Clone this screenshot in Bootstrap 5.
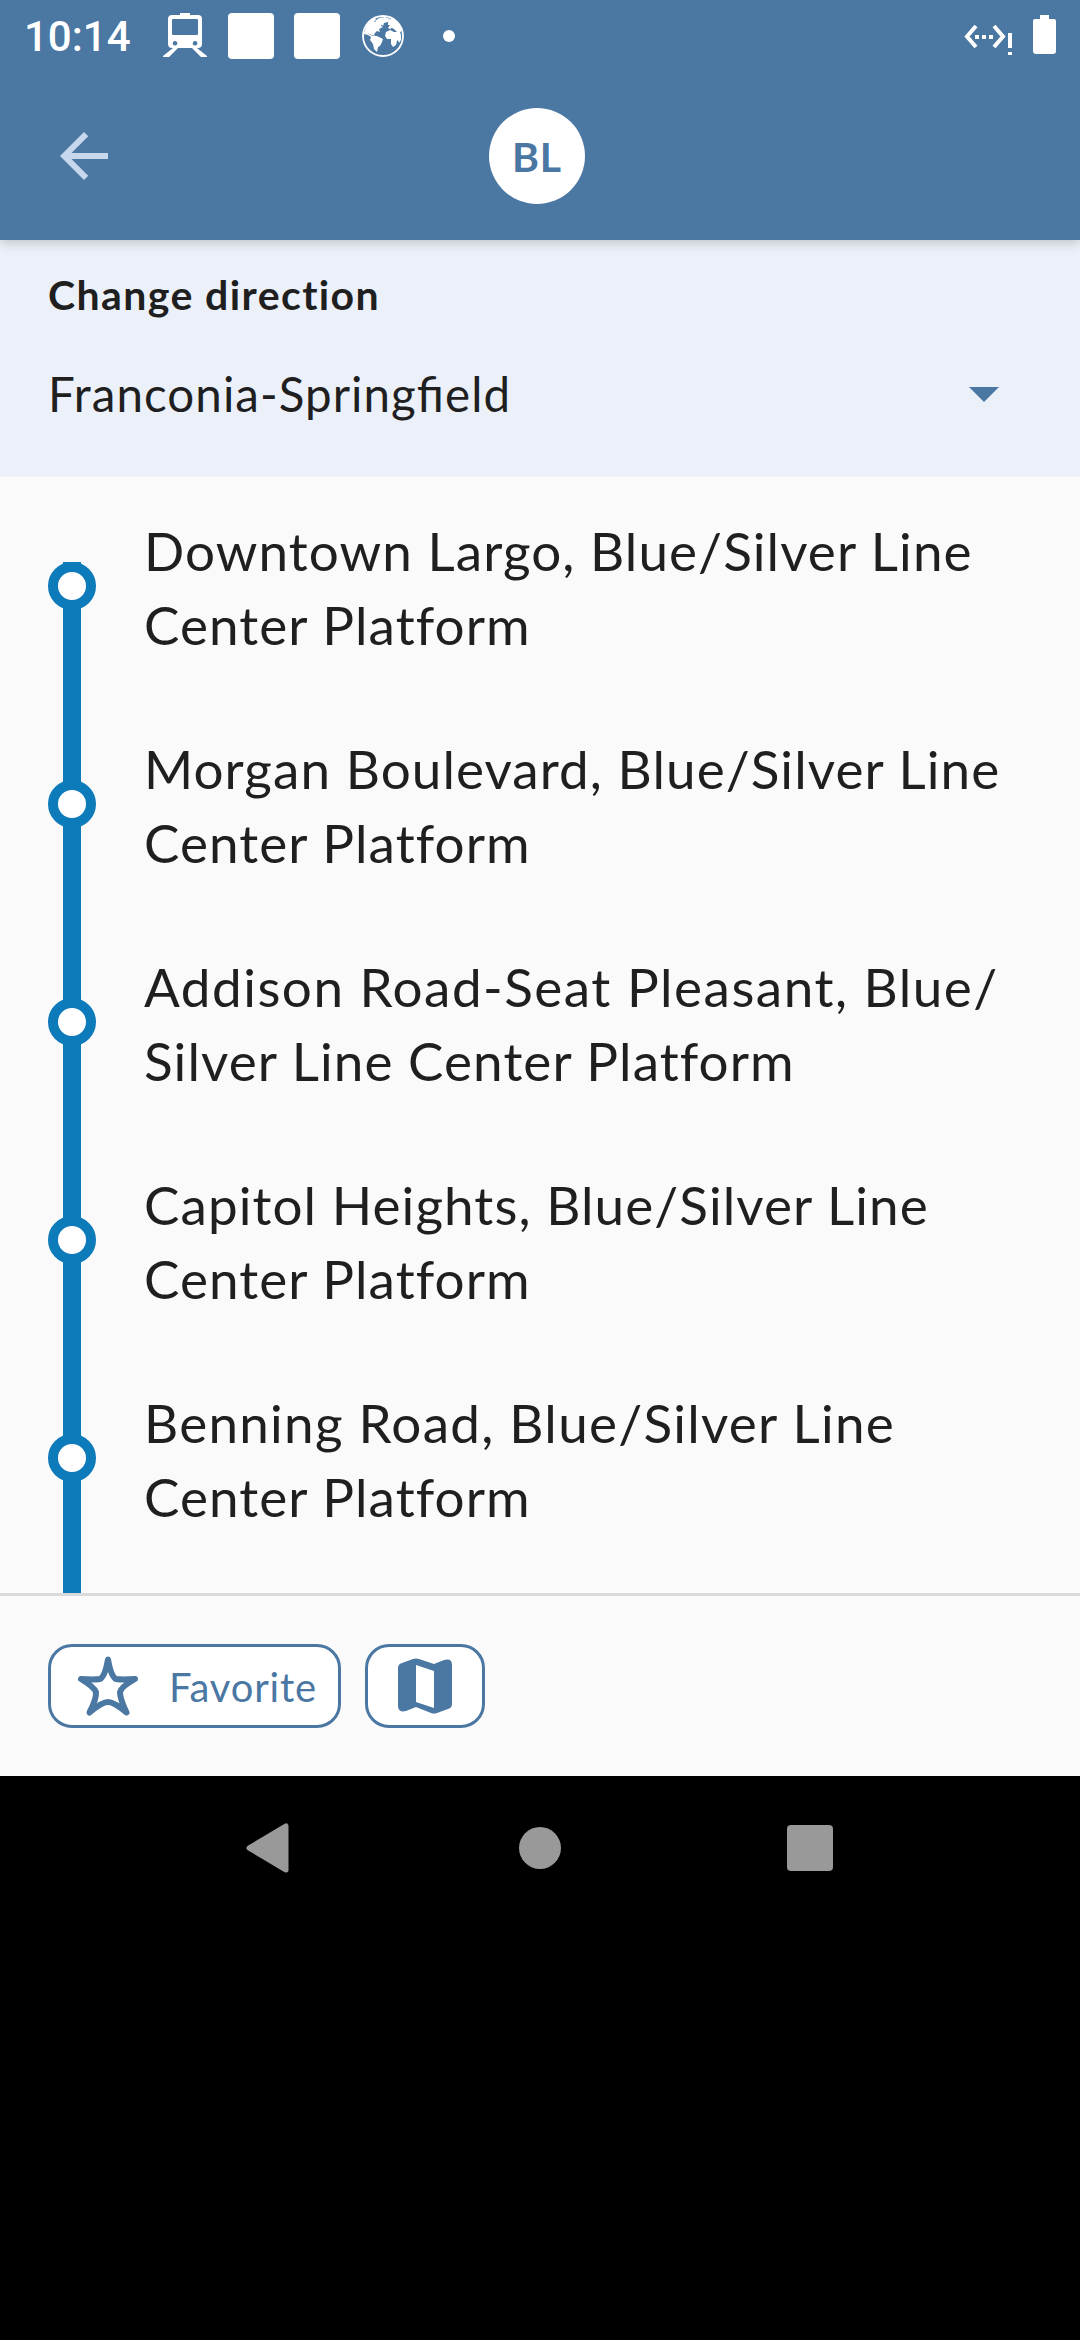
<!DOCTYPE html>
<html lang="en">
<head>
<meta charset="utf-8">
<meta name="viewport" content="width=device-width, initial-scale=1">
<title>Blue Line stops</title>
<link href="https://cdn.jsdelivr.net/npm/bootstrap@5.3.0/dist/css/bootstrap.min.css" rel="stylesheet">
<style>
  body { background: #000; font-family: Lato, "Noto Sans", sans-serif; color: #1f1f1f; }
  svg { display: block; flex: none; }
  .screen { width: 1080px; height: 2340px; background: #000; }
  .brand-bg { background: #4b77a3; }
  .status-bar { height: 72px; padding: 0 24px; z-index: 2; }
  .clock { font: 500 42px/72px Roboto, sans-serif; width: 139px; letter-spacing: 0; padding-top: 2px; }
  .tile { width: 46px; height: 46px; border-radius: 4px; margin-left: 20px; }
  .tile-first { margin-left: 21px; }
  .globe { margin-left: 22px; }
  .more-dot { margin-left: 39px; }
  .battery { margin-left: 20px; }
  .app-bar { height: 168px; padding: 0 48px; box-shadow: 0 2px 12px rgba(0,0,0,.22); z-index: 1; }
  .route-badge { width: 96px; height: 96px; color: #4b77a3; font-size: 41px; font-weight: 700; margin-left: 369px; letter-spacing: .8px; padding-top: 2px; }
  .direction { height: 237px; background: #ecf1f9; padding: 30px 81px 0 48px; }
  .direction h1 { font-size: 41px; font-weight: 700; line-height: 50px; margin: 0 0 44px; letter-spacing: 1.4px; }
  .picked { font-size: 47.5px; line-height: 60px; letter-spacing: 1.05px; font-feature-settings: "liga" 1; }
  .panel { background: #fafafa; }
  .stops { height: 1116px; padding: 37px 48px 0; }
  .stop { height: 218px; gap: 48px; }
  .rail { width: 48px; height: 218px; background: linear-gradient(#0d7aba,#0d7aba) 15px 0/18px 100% no-repeat; flex: none; margin-top: 48px; }
  .ring { width: 48px; height: 48px; border: 10px solid #0d7aba; background: #fff; }
  .stop-name { font-size: 53px; line-height: 74px; white-space: nowrap; letter-spacing: 1.08px; }
  .ls-wide { letter-spacing: 1.5px; }
  .ls-mid { letter-spacing: 1.27px; }
  .actions { height: 183px; border-top: 3px solid #dadada; padding: 48px 48px 0; gap: 24px; }
  .act { height: 84px; border: 3px solid #4b77a3; border-radius: 24px; background: #fff; color: #4b77a3; font-size: 40px; padding: 0; }
  .act-fav { width: 293px; gap: 28px; padding-left: 24px; letter-spacing: .8px; }
  .act-fav span { padding-top: 2px; }
  .act-map { width: 120px; }
  .sys-nav { height: 144px; padding: 0 135px; }
  .sys-nav > div { width: 270px; }
</style>
</head>
<body>
<main class="screen overflow-hidden">
  <div class="status-bar brand-bg text-white d-flex align-items-center position-relative">
    <div class="clock">10:14</div>
    <svg width="44" height="46" viewBox="0 0 44 46" fill="#fff"><path fill-rule="evenodd" d="M17 0h10v2h8q4 0 4 4v25q0 4-4 4h-1l10 8v1h-6L29 35H15L6 44H0v-1l10-8H9q-4 0-4-4V6q0-4 4-4h8zM10 6q-1 0-1 1v14q0 1 1 1h24q1 0 1-1V7q0-1-1-1zM12 28a2.300 2.300 0 1 0 .1 0zM32 28a2.300 2.300 0 1 0 .1 0z"/></svg>
    <div class="tile tile-first bg-white"></div>
    <div class="tile bg-white"></div>
    <svg class="globe" width="42" height="42" viewBox="0 0 42 42"><circle cx="21" cy="21" r="20" fill="none" stroke="#fff" stroke-width="1.800"/><path fill="#fff" d="M2 18 5 9l7-6 2 1-2 3 4-1 4 2-1 3 2 1-4 2 1 3-3-1-3 3 1 2-3-1-2-1zM2 18l5 1 4 2 4 0 6 3-1 3-2 4-2 1-1 5-3-3-1-5-3-4 1-3-3-2-4-1zM17 3l6-1 5 2-2 3-4 1-1 3-3-3-5-2zM26 8l1-3 4-2 6 6 3 7-2 1 1 3 0 5-2 3-1-3-1 1-1 4-3 2-2-3 0-5-4 0-2-3 1-4 4-2 4 2 3 0-3-3-2-1-2 1-2-1 2-3-2 0z"/></svg>
    <svg class="more-dot" width="12" height="12"><circle cx="6" cy="6" r="6" fill="#fff"/></svg>
    <div class="d-flex ms-auto">
      <svg width="50" height="42" viewBox="0 0 50 42"><path d="M13 11 4 21.500 13 32M31 11l9 10.500L31 32" fill="none" stroke="#fff" stroke-width="4"/><path fill="#fff" d="M12 20h4v4h-4zM19 20h4v4h-4zM26 20h4v4h-4zM45 18h4v15h-4zM45 37h4v3h-4z"/></svg>
      <svg class="battery" width="23" height="40" viewBox="0 0 23 40"><path fill="#fff" d="M7 0h9v4h5q2 0 2 2v30q0 3-3 3H3q-3 0-3-3V6q0-2 2-2h5z"/></svg>
    </div>
  </div>
  <header class="app-bar brand-bg d-flex align-items-center position-relative">
    <svg width="72" height="72" viewBox="0 0 24 24" fill="#c8d8ec"><path d="M20 11H7.830l5.590-5.590L12 4l-8 8 8 8 1.410-1.410L7.830 13H20z"/></svg>
    <div class="route-badge rounded-circle bg-white d-flex align-items-center justify-content-center">BL</div>
  </header>
  <section class="direction">
    <h1>Change direction</h1>
    <div class="d-flex align-items-center justify-content-between">
      <span class="picked">Franconia-Springfield</span>
      <svg width="30" height="15"><path d="M0 0h30L15 15z" fill="#4b77a3"/></svg>
    </div>
  </section>
  <section class="panel stops overflow-hidden">
    <div class="stop d-flex"><div class="rail"><div class="ring rounded-circle"></div></div><div class="stop-name">Downtown Largo, Blue/Silver Line<br>Center Platform</div></div>
    <div class="stop d-flex"><div class="rail"><div class="ring rounded-circle"></div></div><div class="stop-name">Morgan Boulevard, Blue/Silver Line<br>Center Platform</div></div>
    <div class="stop d-flex"><div class="rail"><div class="ring rounded-circle"></div></div><div class="stop-name"><span class="ls-wide">Addison Road-Seat Pleasant, Blue/</span><br>Silver Line Center Platform</div></div>
    <div class="stop d-flex"><div class="rail"><div class="ring rounded-circle"></div></div><div class="stop-name">Capitol Heights, Blue/Silver Line<br>Center Platform</div></div>
    <div class="stop d-flex"><div class="rail"><div class="ring rounded-circle"></div></div><div class="stop-name"><span class="ls-mid">Benning Road, Blue/Silver Line</span><br>Center Platform</div></div>
  </section>
  <footer class="panel actions d-flex">
    <button class="btn act act-fav d-flex align-items-center"><svg width="66" height="66" viewBox="0 0 66 66"><path d="M33 6.500q3 17 8 19.500 7 1 19 0-14 8-15 13 0 7 6.500 20.500-12.500-10.500-18.500-10.500T14.500 59.500q7-13.500 6.500-20.500-2-5-15-13 12 1 19 0 5-2.500 8-19.500z" fill="none" stroke="#4b77a3" stroke-width="6" stroke-linejoin="round"/></svg><span>Favorite</span></button>
    <button class="btn act act-map d-flex align-items-center justify-content-center"><svg width="54" height="56" viewBox="0 0 54 56"><path fill="#4b77a3" fill-rule="evenodd" d="M0 10q0-4 4-5L15 1q3-1 6 0l15 5 10-4q8-2 8 5v39q0 4-4 5l-11 4q-3 1-6 0l-15-6-10 4q-8 2-8-5zM18 7v37l18 6V13z"/></svg></button>
  </footer>
  <nav class="sys-nav d-flex align-items-center">
    <div class="d-flex justify-content-center"><svg width="48" height="50" viewBox="0 0 48 50"><path d="M3 25 40 3v44z" fill="#999" stroke="#999" stroke-width="5" stroke-linejoin="round"/></svg></div>
    <div class="d-flex justify-content-center"><svg width="42" height="42"><circle cx="21" cy="21" r="21" fill="#999"/></svg></div>
    <div class="d-flex justify-content-center"><svg width="46" height="46"><rect width="46" height="46" rx="4" fill="#999"/></svg></div>
  </nav>
</main>
<script src="https://cdn.jsdelivr.net/npm/bootstrap@5.3.0/dist/js/bootstrap.bundle.min.js"></script>
</body>
</html>
